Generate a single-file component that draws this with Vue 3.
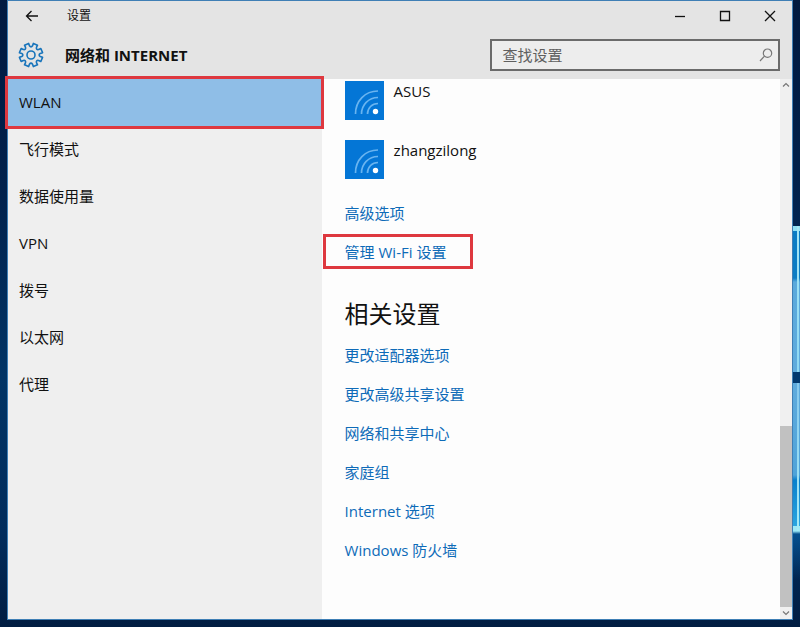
<template>
  <div class="desktop">
    <div class="window">
      <header class="window-header">
        <div class="title-bar">
          <button type="button" class="back-btn" aria-label="返回">
            <svg width="14" height="12" viewBox="0 0 14 12">
              <path d="M13 6H1.5M6.5 1L1.5 6l5 5" />
            </svg>
          </button>
          <span class="title">设置</span>
          <div class="window-controls">
            <button type="button" aria-label="最小化">
              <svg width="12" height="12" viewBox="0 0 12 12"><path d="M1 6.5h10" /></svg>
            </button>
            <button type="button" aria-label="最大化">
              <svg width="12" height="12" viewBox="0 0 12 12"><path d="M1.5 1.5h9v9h-9z" /></svg>
            </button>
            <button type="button" aria-label="关闭">
              <svg width="12" height="12" viewBox="0 0 12 12"><path d="M1 1l10 10M11 1L1 11" /></svg>
            </button>
          </div>
        </div>

        <div class="page-bar">
          <svg class="gear" width="26" height="26" viewBox="-13 -13 26 26">
            <path :d="gearPath" />
            <circle r="4" />
          </svg>
          <h1>网络和 INTERNET</h1>
          <form class="search" @submit.prevent>
            <input v-model="query" type="text" placeholder="查找设置" aria-label="查找设置" />
            <button type="submit" aria-label="搜索">
              <svg width="14" height="14" viewBox="0 0 14 14">
                <circle cx="8.5" cy="5.2" r="4.2" />
                <path d="M5.5 8.2L1 13" />
              </svg>
            </button>
          </form>
        </div>
      </header>

      <div class="body">
        <nav class="sidebar">
          <a
            v-for="item in navItems"
            :key="item"
            href="#"
            :class="{ active: item === current }"
            @click.prevent="current = item"
          >{{ item }}</a>
        </nav>

        <main class="content">
          <ul class="networks">
            <li v-for="name in networks" :key="name">
              <svg width="39" height="39" viewBox="0 0 39 39">
                <rect width="39" height="39" fill="#0476d6" />
                <g class="waves">
                  <path d="M10.5 33C10.5 20 20 10 33 10" />
                  <path d="M16.5 33C16.5 24 23.5 16.500 33 16.500" />
                  <path d="M22.500 33C22.500 27 27 22.500 33 22.500" />
                </g>
                <circle cx="30.500" cy="30.500" r="2.700" fill="#fff" />
              </svg>
              <span>{{ name }}</span>
            </li>
          </ul>

          <ul class="links">
            <li><a href="#">高级选项</a></li>
            <li><a href="#" class="marked">管理 Wi-Fi 设置</a></li>
          </ul>

          <h2>相关设置</h2>
          <ul class="links">
            <li v-for="link in relatedLinks" :key="link">
              <a href="#">{{ link }}</a>
            </li>
          </ul>
        </main>

        <div class="scrollbar" aria-hidden="true">
          <svg width="8" height="12" viewBox="0 0 8 12"><path d="M1 7.500l3-3 3 3" /></svg>
          <div class="track">
            <div class="thumb"></div>
          </div>
          <svg width="8" height="12" viewBox="0 0 8 12"><path d="M1 4.500l3 3 3-3" /></svg>
        </div>
      </div>
    </div>
  </div>
</template>

<script setup>
import { ref } from 'vue';

const query = ref('');
const current = ref('WLAN');

const navItems = ['WLAN', '飞行模式', '数据使用量', 'VPN', '拨号', '以太网', '代理'];
const networks = ['ASUS', 'zhangzilong'];
const relatedLinks = [
  '更改适配器选项',
  '更改高级共享设置',
  '网络和共享中心',
  '家庭组',
  'Internet 选项',
  'Windows 防火墙'
];

// Outline of the gear: flat teeth joined by rounded notches
const teeth = 8;
const point = (degrees, radius) => {
  const angle = (degrees * Math.PI) / 180;
  return `${(radius * Math.cos(angle)).toFixed(2)} ${(radius * Math.sin(angle)).toFixed(2)}`;
};
let gearPath = '';
for (let i = 0; i < teeth; i++) {
  const mid = (i + 0.5) * (360 / teeth);
  gearPath += `${i ? 'L' : 'M'}${point(mid - 13, 9.4)}L${point(mid - 11, 11.8)}`;
  gearPath += `L${point(mid + 11, 11.8)}L${point(mid + 13, 9.4)}`;
  gearPath += `Q${point(mid + 22.5, 7)} ${point(mid + 32, 9.4)}`;
}
gearPath += 'Z';
</script>

<style>
body {
  margin: 0;
}
</style>

<style scoped>
.desktop {
  box-sizing: border-box;
  display: flex;
  min-height: 100vh;
  padding: 0 7px 7px;
  font-family: "Open Sans", "Noto Sans CJK SC", sans-serif;
  font-size: 15px;
  line-height: 20px;
  color: #111;
  background:
    linear-gradient(
      transparent 226px,
      #a5e6f5 226px, #8fd8f2 372px,
      transparent 372px, transparent 383px,
      #86c8ec 383px, #a5ecf7 531px,
      transparent 531px
    ) right 1px top / 2px 100% no-repeat,
    linear-gradient(
      transparent 226px,
      #8fe0f5 226px, #8fe0f5 231px,
      #0b7cc4 231px, #0b7cc4 278px,
      #5aa9dc 282px, #5fabdd 372px,
      #02396f 372px, #02396f 383px,
      #5fabdd 383px, #4ea3d9 475px,
      #0880cc 480px, #2aa5e0 526px,
      #9ceaf7 526px, #9ceaf7 531px,
      #05508f 534px, transparent 580px
    ) right top / 7px 100% no-repeat,
    linear-gradient(#011a40, #01214c 30%, #013465 60%, #012c5c 85%, #011d42);
}

.window {
  flex: 1;
  min-width: 0;
  display: flex;
  flex-direction: column;
  border: 1px solid #3f7fb5;
  background: #fdfdfd;
}

.window-header {
  background: #e4e4e4;
}

button {
  display: flex;
  align-items: center;
  justify-content: center;
  padding: 0;
  border: 0;
  background: none;
}

svg {
  flex: none;
  fill: none;
}

.title-bar {
  display: flex;
  align-items: center;
  height: 30px;
}

.title-bar svg {
  stroke: #111;
  stroke-width: 1.3;
}

.back-btn {
  width: 47px;
  height: 30px;
}

.title {
  margin-left: 12px;
  font-size: 12px;
}

.window-controls {
  display: flex;
  margin-left: auto;
}

.window-controls button {
  width: 45px;
  height: 30px;
}

.page-bar {
  display: flex;
  align-items: center;
  height: 48px;
  padding: 0 12px 0 10px;
}

.gear {
  stroke: #1874bb;
  stroke-width: 1.6;
  stroke-linejoin: round;
}

h1 {
  margin: 0 auto 0 21px;
  font-size: 15px;
  font-weight: 700;
}

.search {
  box-sizing: border-box;
  display: flex;
  width: 38%;
  height: 32px;
  border: 2px solid #6b6b6b;
  background: #ededed;
}

.search input {
  flex: 1;
  min-width: 0;
  padding: 0 10px;
  border: 0;
  outline: 0;
  background: none;
  font: inherit;
}

.search input::placeholder {
  color: #5f5f5f;
}

.search button {
  width: 24px;
}

.search svg {
  stroke: #777;
  stroke-width: 1.2;
}

.body {
  flex: 1;
  display: flex;
}

.sidebar {
  flex: 0 0 40%;
  background: #efefef;
}

.sidebar a {
  display: block;
  position: relative;
  padding: 13px 11px 14px;
  color: #111;
  text-decoration: none;
}

.sidebar a.active {
  background: #8fbee7;
}

.sidebar a.active::after,
.marked::after {
  content: "";
  position: absolute;
  border: 3px solid #de383f;
}

.sidebar a.active::after {
  inset: -3px -2px -3px -3px;
}

.content {
  flex: 1;
  min-width: 0;
  padding: 2px 23px;
}

ul {
  margin: 0;
  padding: 0;
  list-style: none;
}

.networks {
  display: flex;
  flex-direction: column;
  gap: 20px;
}

.networks li {
  display: flex;
  gap: 10px;
}

.waves {
  stroke: #69b4f0;
  stroke-width: 1.7;
}

.links {
  display: flex;
  flex-direction: column;
  gap: 19px;
}

.networks + .links {
  margin-top: 24px;
}

.links a {
  position: relative;
  color: #0e6bb8;
  text-decoration: none;
}

.marked::after {
  inset: -8px -27px -7px -22px;
}

h2 {
  margin: 36px 0 15px;
  font-size: 24px;
  font-weight: 400;
  line-height: 32px;
}

.scrollbar {
  display: flex;
  flex-direction: column;
  align-items: center;
  width: 12px;
  background: #f0f0f0;
}

.scrollbar svg {
  stroke: #777;
  stroke-width: 1.2;
}

.track {
  flex: 1;
  display: flex;
  flex-direction: column;
  justify-content: flex-end;
  width: 100%;
}

.thumb {
  height: 35%;
  background: #c1c1c1;
}
</style>
